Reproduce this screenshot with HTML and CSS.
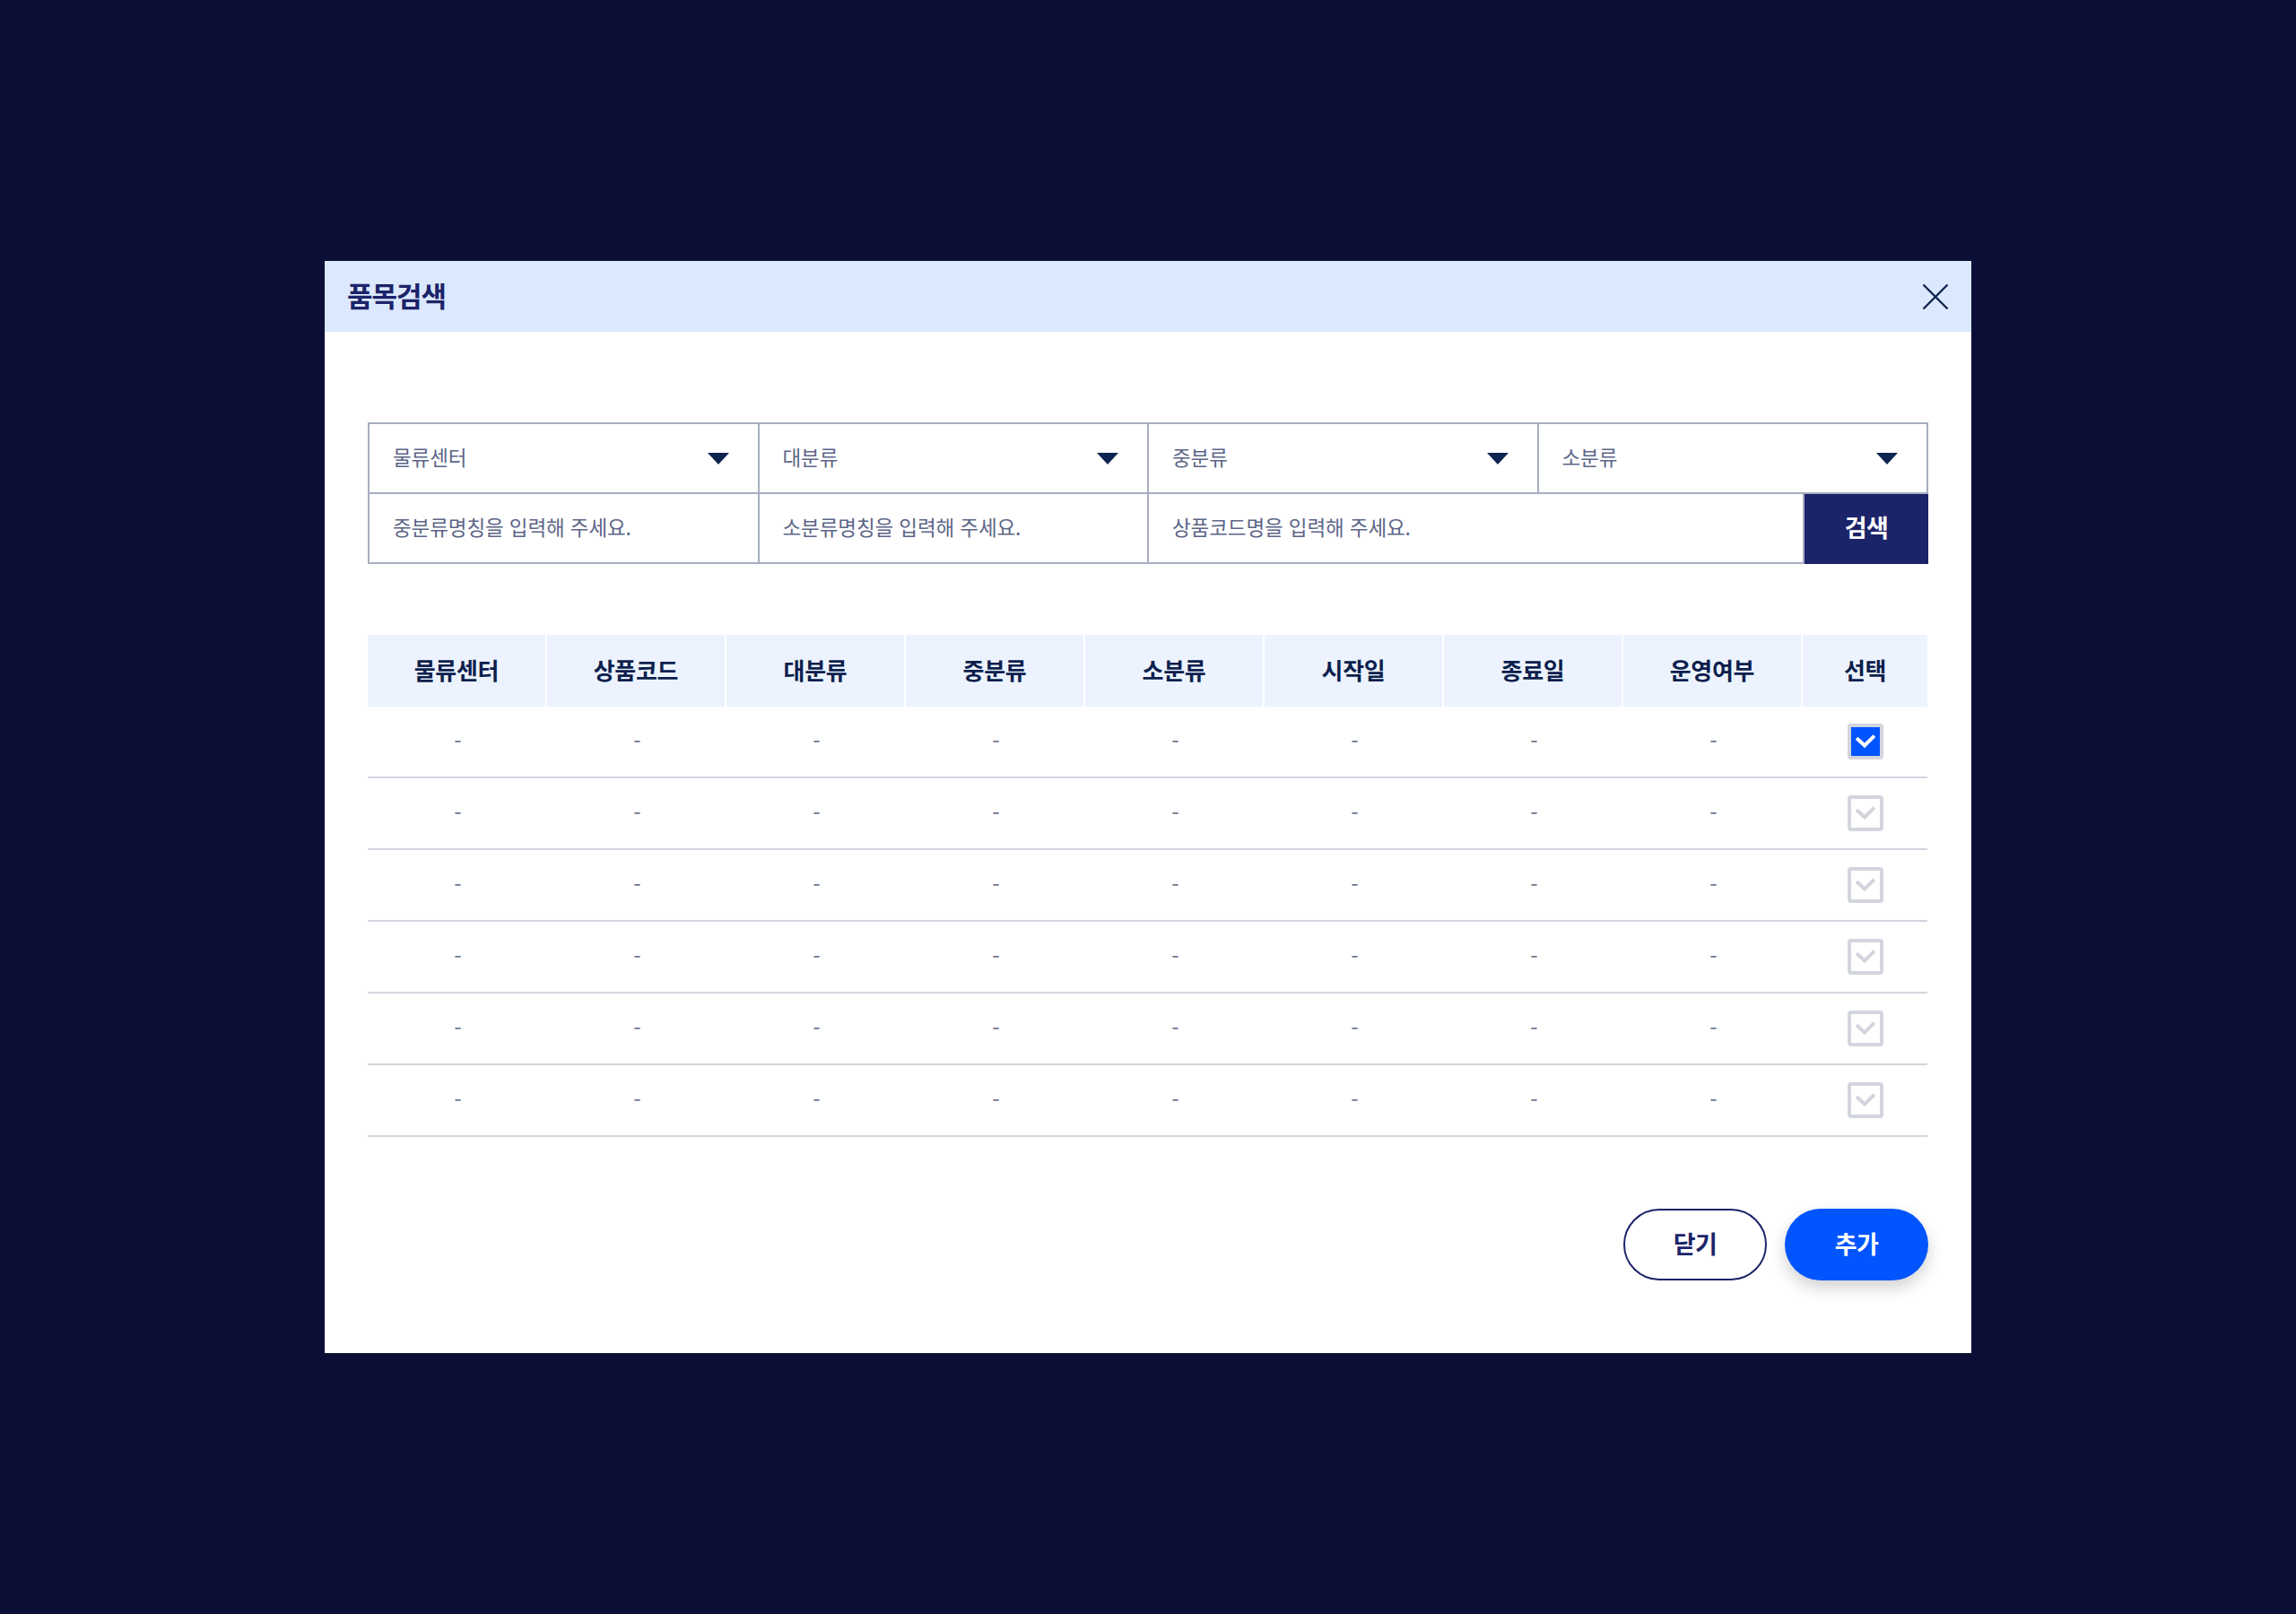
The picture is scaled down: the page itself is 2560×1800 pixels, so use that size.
FILE: index.html
```html
<!DOCTYPE html>
<html lang="ko">
<head>
<meta charset="utf-8">
<title>품목검색</title>
<link rel="stylesheet" href="styles.css">
</head>
<body>
<div class="screen">
  <div class="modal">
    <div class="modal-head">
      <h1 class="modal-title">품목검색</h1>
      <button class="close-btn" type="button" aria-label="닫기">
        <svg width="30" height="30" viewBox="0 0 30 30"><path d="M1.5 1.5 L28.5 28.5 M28.5 1.5 L1.5 28.5" stroke="#0e2350" stroke-width="2.4" fill="none"/></svg>
      </button>
    </div>
    <div class="modal-body">
      <div class="filter">
        <div class="cell select"><span class="label">물류센터</span><span class="caret"></span></div>
        <div class="cell select"><span class="label">대분류</span><span class="caret"></span></div>
        <div class="cell select"><span class="label">중분류</span><span class="caret"></span></div>
        <div class="cell select"><span class="label">소분류</span><span class="caret"></span></div>
        <div class="cell input"><span class="label">중분류명칭을 입력해 주세요.</span></div>
        <div class="cell input"><span class="label">소분류명칭을 입력해 주세요.</span></div>
        <div class="search-row">
          <div class="cell input"><span class="label">상품코드명을 입력해 주세요.</span></div>
          <button class="search-btn" type="button">검색</button>
        </div>
      </div>

      <div class="table">
        <div class="thead">
          <div class="th">물류센터</div>
          <div class="th">상품코드</div>
          <div class="th">대분류</div>
          <div class="th">중분류</div>
          <div class="th">소분류</div>
          <div class="th">시작일</div>
          <div class="th">종료일</div>
          <div class="th">운영여부</div>
          <div class="th">선택</div>
        </div>
        <div class="tr">
          <div class="td">-</div><div class="td">-</div><div class="td">-</div><div class="td">-</div><div class="td">-</div><div class="td">-</div><div class="td">-</div><div class="td">-</div>
          <div class="td"><span class="check checked"><svg width="22" height="16" viewBox="0 0 22 16"><path d="M2.5 5.5 L10 12.5 L19.5 3" stroke="#fff" stroke-width="4" fill="none" stroke-linecap="square"/></svg></span></div>
        </div>
        <div class="tr">
          <div class="td">-</div><div class="td">-</div><div class="td">-</div><div class="td">-</div><div class="td">-</div><div class="td">-</div><div class="td">-</div><div class="td">-</div>
          <div class="td"><span class="check"><svg width="22" height="16" viewBox="0 0 22 16"><path d="M2.5 5.5 L10 12.5 L19.5 3" stroke="#d3d5de" stroke-width="4" fill="none" stroke-linecap="square"/></svg></span></div>
        </div>
        <div class="tr">
          <div class="td">-</div><div class="td">-</div><div class="td">-</div><div class="td">-</div><div class="td">-</div><div class="td">-</div><div class="td">-</div><div class="td">-</div>
          <div class="td"><span class="check"><svg width="22" height="16" viewBox="0 0 22 16"><path d="M2.5 5.5 L10 12.5 L19.5 3" stroke="#d3d5de" stroke-width="4" fill="none" stroke-linecap="square"/></svg></span></div>
        </div>
        <div class="tr">
          <div class="td">-</div><div class="td">-</div><div class="td">-</div><div class="td">-</div><div class="td">-</div><div class="td">-</div><div class="td">-</div><div class="td">-</div>
          <div class="td"><span class="check"><svg width="22" height="16" viewBox="0 0 22 16"><path d="M2.5 5.5 L10 12.5 L19.5 3" stroke="#d3d5de" stroke-width="4" fill="none" stroke-linecap="square"/></svg></span></div>
        </div>
        <div class="tr">
          <div class="td">-</div><div class="td">-</div><div class="td">-</div><div class="td">-</div><div class="td">-</div><div class="td">-</div><div class="td">-</div><div class="td">-</div>
          <div class="td"><span class="check"><svg width="22" height="16" viewBox="0 0 22 16"><path d="M2.5 5.5 L10 12.5 L19.5 3" stroke="#d3d5de" stroke-width="4" fill="none" stroke-linecap="square"/></svg></span></div>
        </div>
        <div class="tr">
          <div class="td">-</div><div class="td">-</div><div class="td">-</div><div class="td">-</div><div class="td">-</div><div class="td">-</div><div class="td">-</div><div class="td">-</div>
          <div class="td"><span class="check"><svg width="22" height="16" viewBox="0 0 22 16"><path d="M2.5 5.5 L10 12.5 L19.5 3" stroke="#d3d5de" stroke-width="4" fill="none" stroke-linecap="square"/></svg></span></div>
        </div>
      </div>

      <div class="actions">
        <button class="btn btn-outline" type="button">닫기</button>
        <button class="btn btn-primary" type="button">추가</button>
      </div>
    </div>
  </div>
</div>
</body>
</html>
```

FILE: styles.css
```css
* { box-sizing: border-box; }

html, body {
  margin: 0;
  padding: 0;
}

body {
  background: #0c0f35;
  font-family: "Noto Sans CJK KR", "Noto Sans", sans-serif;
  color: #1b2369;
}

.screen {
  width: 2560px;
  height: 1800px;
  display: flex;
  align-items: center;
  justify-content: center;
}

.modal {
  width: 1836px;
  height: 1218px;
  background: #ffffff;
  display: flex;
  flex-direction: column;
}

.modal-head {
  height: 80px;
  background: #dbe8fe;
  display: flex;
  align-items: center;
  justify-content: space-between;
  padding: 0 25px 0 25px;
}

.modal-title {
  margin: 0 0 4px 0;
  font-size: 31px;
  font-weight: 700;
  letter-spacing: -1px;
  color: #1b2369;
  line-height: 1;
}

.close-btn {
  border: 0;
  background: transparent;
  padding: 0;
  width: 30px;
  height: 30px;
  display: flex;
}

.modal-body {
  padding: 101px 48px 81px 48px;
  display: flex;
  flex-direction: column;
}

/* filter block */
.filter {
  width: 1740px;
  display: grid;
  grid-template-columns: repeat(4, 1fr);
  gap: 2px;
  padding: 2px;
  background: #a7adc1;
}

.cell {
  background: #fff;
  height: 76px;
  display: flex;
  align-items: center;
  padding: 0 32px 5px 26px;
  font-size: 22.5px;
  letter-spacing: -0.1px;
  color: #5c6587;
}

.cell.select {
  justify-content: space-between;
}

.caret {
  width: 0;
  height: 0;
  margin-top: 5px;
  border-left: 12px solid transparent;
  border-right: 12px solid transparent;
  border-top: 13px solid #0e2350;
}

.search-row {
  grid-column: 3 / 5;
  display: grid;
  grid-template-columns: 1fr 138px;
  gap: 2px;
  margin: 0 -2px -2px 0;
}

.search-row .cell {
  height: 76px;
}

.search-btn {
  border: 0;
  margin: 0;
  padding: 0 0 5px 0;
  background: #1b2369;
  color: #fff;
  font-family: inherit;
  font-size: 27px;
  font-weight: 700;
  letter-spacing: -0.5px;
  height: 78px;
}

/* table */
.table {
  margin-top: 79px;
  width: 1739px;
}

.thead,
.tr {
  display: grid;
  grid-template-columns: repeat(8, 1fr) 139px;
  column-gap: 2px;
}

.th {
  height: 80px;
  padding-bottom: 3px;
  background: #ecf3fe;
  display: flex;
  align-items: center;
  justify-content: center;
  font-size: 26px;
  font-weight: 700;
  letter-spacing: -0.3px;
  color: #0d1f4d;
}

.tr {
  border-bottom: 2px solid #d3d5de;
}

.td {
  height: 78px;
  padding: 0 0 3px 3px;
  display: flex;
  align-items: center;
  justify-content: center;
  font-size: 24px;
  color: #6c738d;
}

.td:last-child {
  padding: 0;
}

.check {
  width: 40px;
  height: 40px;
  border: 4px solid #d3d5de;
  border-radius: 4px;
  background: #fff;
  display: flex;
  align-items: center;
  justify-content: center;
}

.check.checked {
  background: #0055ff;
}

/* actions */
.actions {
  margin-top: 80px;
  display: flex;
  justify-content: flex-end;
  gap: 20px;
  width: 1740px;
}

.btn {
  width: 160px;
  height: 80px;
  border-radius: 40px;
  font-family: inherit;
  font-size: 27px;
  font-weight: 700;
  letter-spacing: -0.5px;
  padding: 0 0 3px 0;
}

.btn-outline {
  background: #fff;
  border: 2px solid #1b2369;
  color: #1b2369;
}

.btn-primary {
  background: #0055ff;
  border: 0;
  color: #fff;
  box-shadow: 0 8px 18px rgba(0, 0, 0, 0.18);
}
```
